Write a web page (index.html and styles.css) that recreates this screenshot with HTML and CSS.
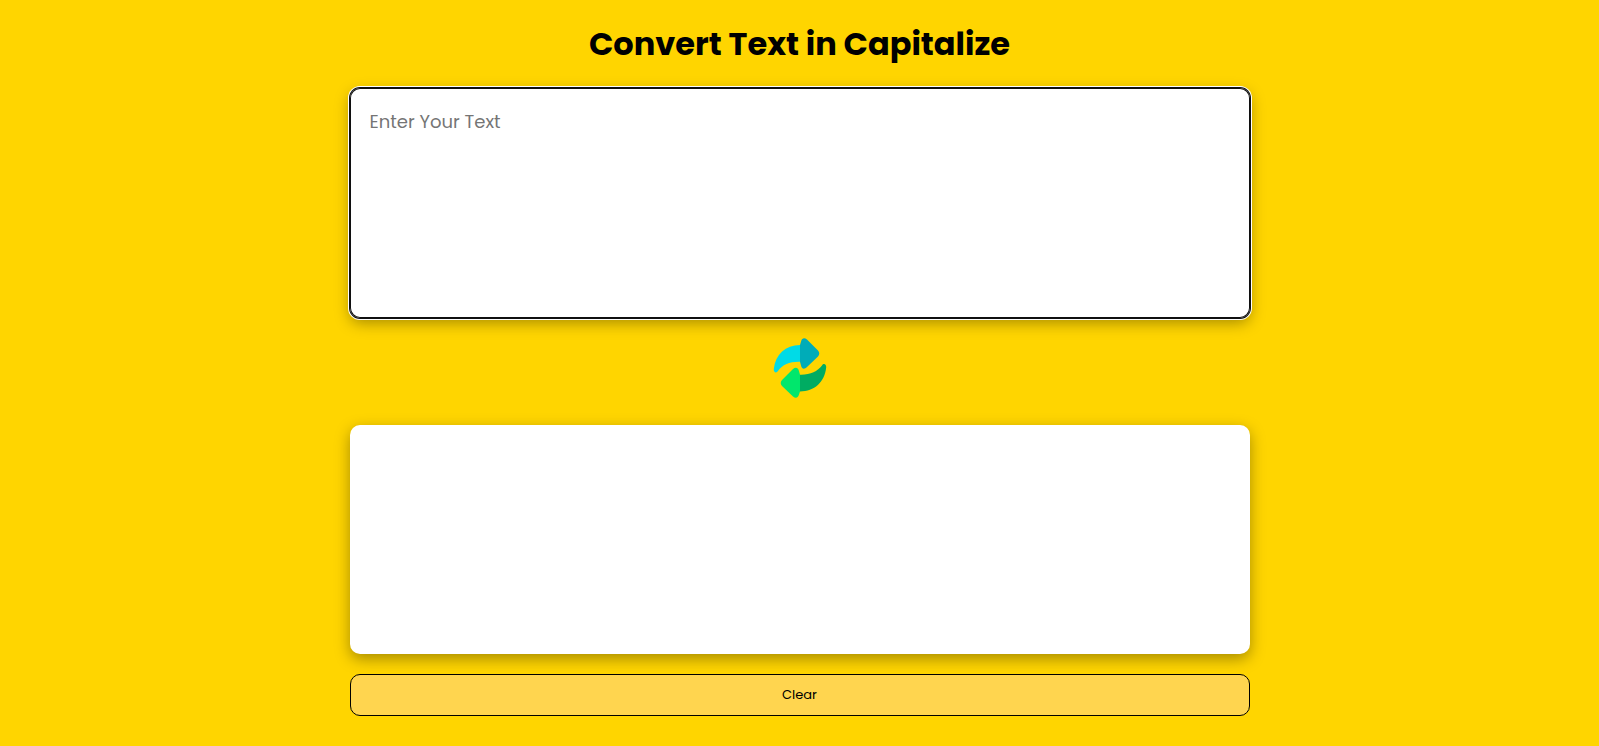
FILE: index.html
```html
<!DOCTYPE html>
<html lang="en">
<head>
<meta charset="utf-8">
<meta name="viewport" content="width=device-width, initial-scale=1">
<title>Convert Text in Capitalize</title>
<link rel="stylesheet" href="styles.css">
</head>
<body>
<main class="converter">
  <h1 class="title">Convert Text in Capitalize</h1>
  <textarea class="field field-active" placeholder="Enter Your Text" aria-label="Text to convert"></textarea>
  <svg class="swap" viewBox="0 0 64 64" aria-hidden="true">
    <path fill="#00dbe7" d="M32 9C17.500 9.500 7.500 18 5.800 33C5.500 36.500 8.500 37.500 10 35C14.500 28.500 22 25.500 32 25.800Z"/>
    <path fill="#00acb8" d="M32 9L33.200 5C34 1.700 36.500 1.300 39 3.500L50 14.500C51.700 16.500 51.700 18.500 50 20.500L39 31C36 34 33.500 32.500 33 29.500L32 25.800Z"/>
    <path fill="#00ac62" d="M32 55.500C46.500 55 56.500 46.500 58.200 31.500C58.500 28 55.500 27 54 29.500C49.500 35.500 42 39 32 38.700Z"/>
    <path fill="#00e76c" d="M32 38.700L30.800 34.500C30 31.500 27.500 31 25 33L14 44C12.300 46 12.300 48 14 50L25 60.500C28 63 30.300 61.500 31 58.500L32 55.500Z"/>
  </svg>
  <textarea class="field" readonly aria-label="Capitalized text"></textarea>
  <button class="clear" type="button">Clear</button>
</main>
</body>
</html>
```
FILE: styles.css
```css
* {
  box-sizing: border-box;
  margin: 0;
  padding: 0;
}

body {
  background: #ffd500;
  color: #000;
  font-family: Poppins, Inter, sans-serif;
}

.converter {
  display: flex;
  flex-direction: column;
  align-items: center;
  width: 100%;
  max-width: 940px;
  margin: 0 auto;
  padding: 20px;
}

.title {
  margin-bottom: 20px;
  font-size: 32px;
  line-height: 48px;
  font-weight: 700;
  text-align: center;
}

.field {
  display: block;
  width: 100%;
  height: 229px;
  padding: 20px;
  border: 0;
  border-radius: 10px;
  background: #fff;
  box-shadow: 0 5px 15px rgba(0, 0, 0, 0.35);
  font-family: inherit;
  font-size: 18px;
  line-height: 27px;
  resize: none;
  outline: 0;
}

.field::placeholder {
  color: #757575;
}

.field-active {
  height: 230px;
  box-shadow:
    inset 0 0 0 1px #101010,
    0 0 0 1px #101010,
    0 0 0 2px #fff,
    0 5px 15px rgba(0, 0, 0, 0.35);
}

.swap {
  width: 64px;
  height: 64px;
  margin: 18px 0 25px;
}

.clear {
  width: 100%;
  height: 42px;
  margin-top: 20px;
  border: 1px solid #000;
  border-radius: 10px;
  background: #ffd54f;
  color: #000;
  font-family: inherit;
  font-size: 13px;
}
```
